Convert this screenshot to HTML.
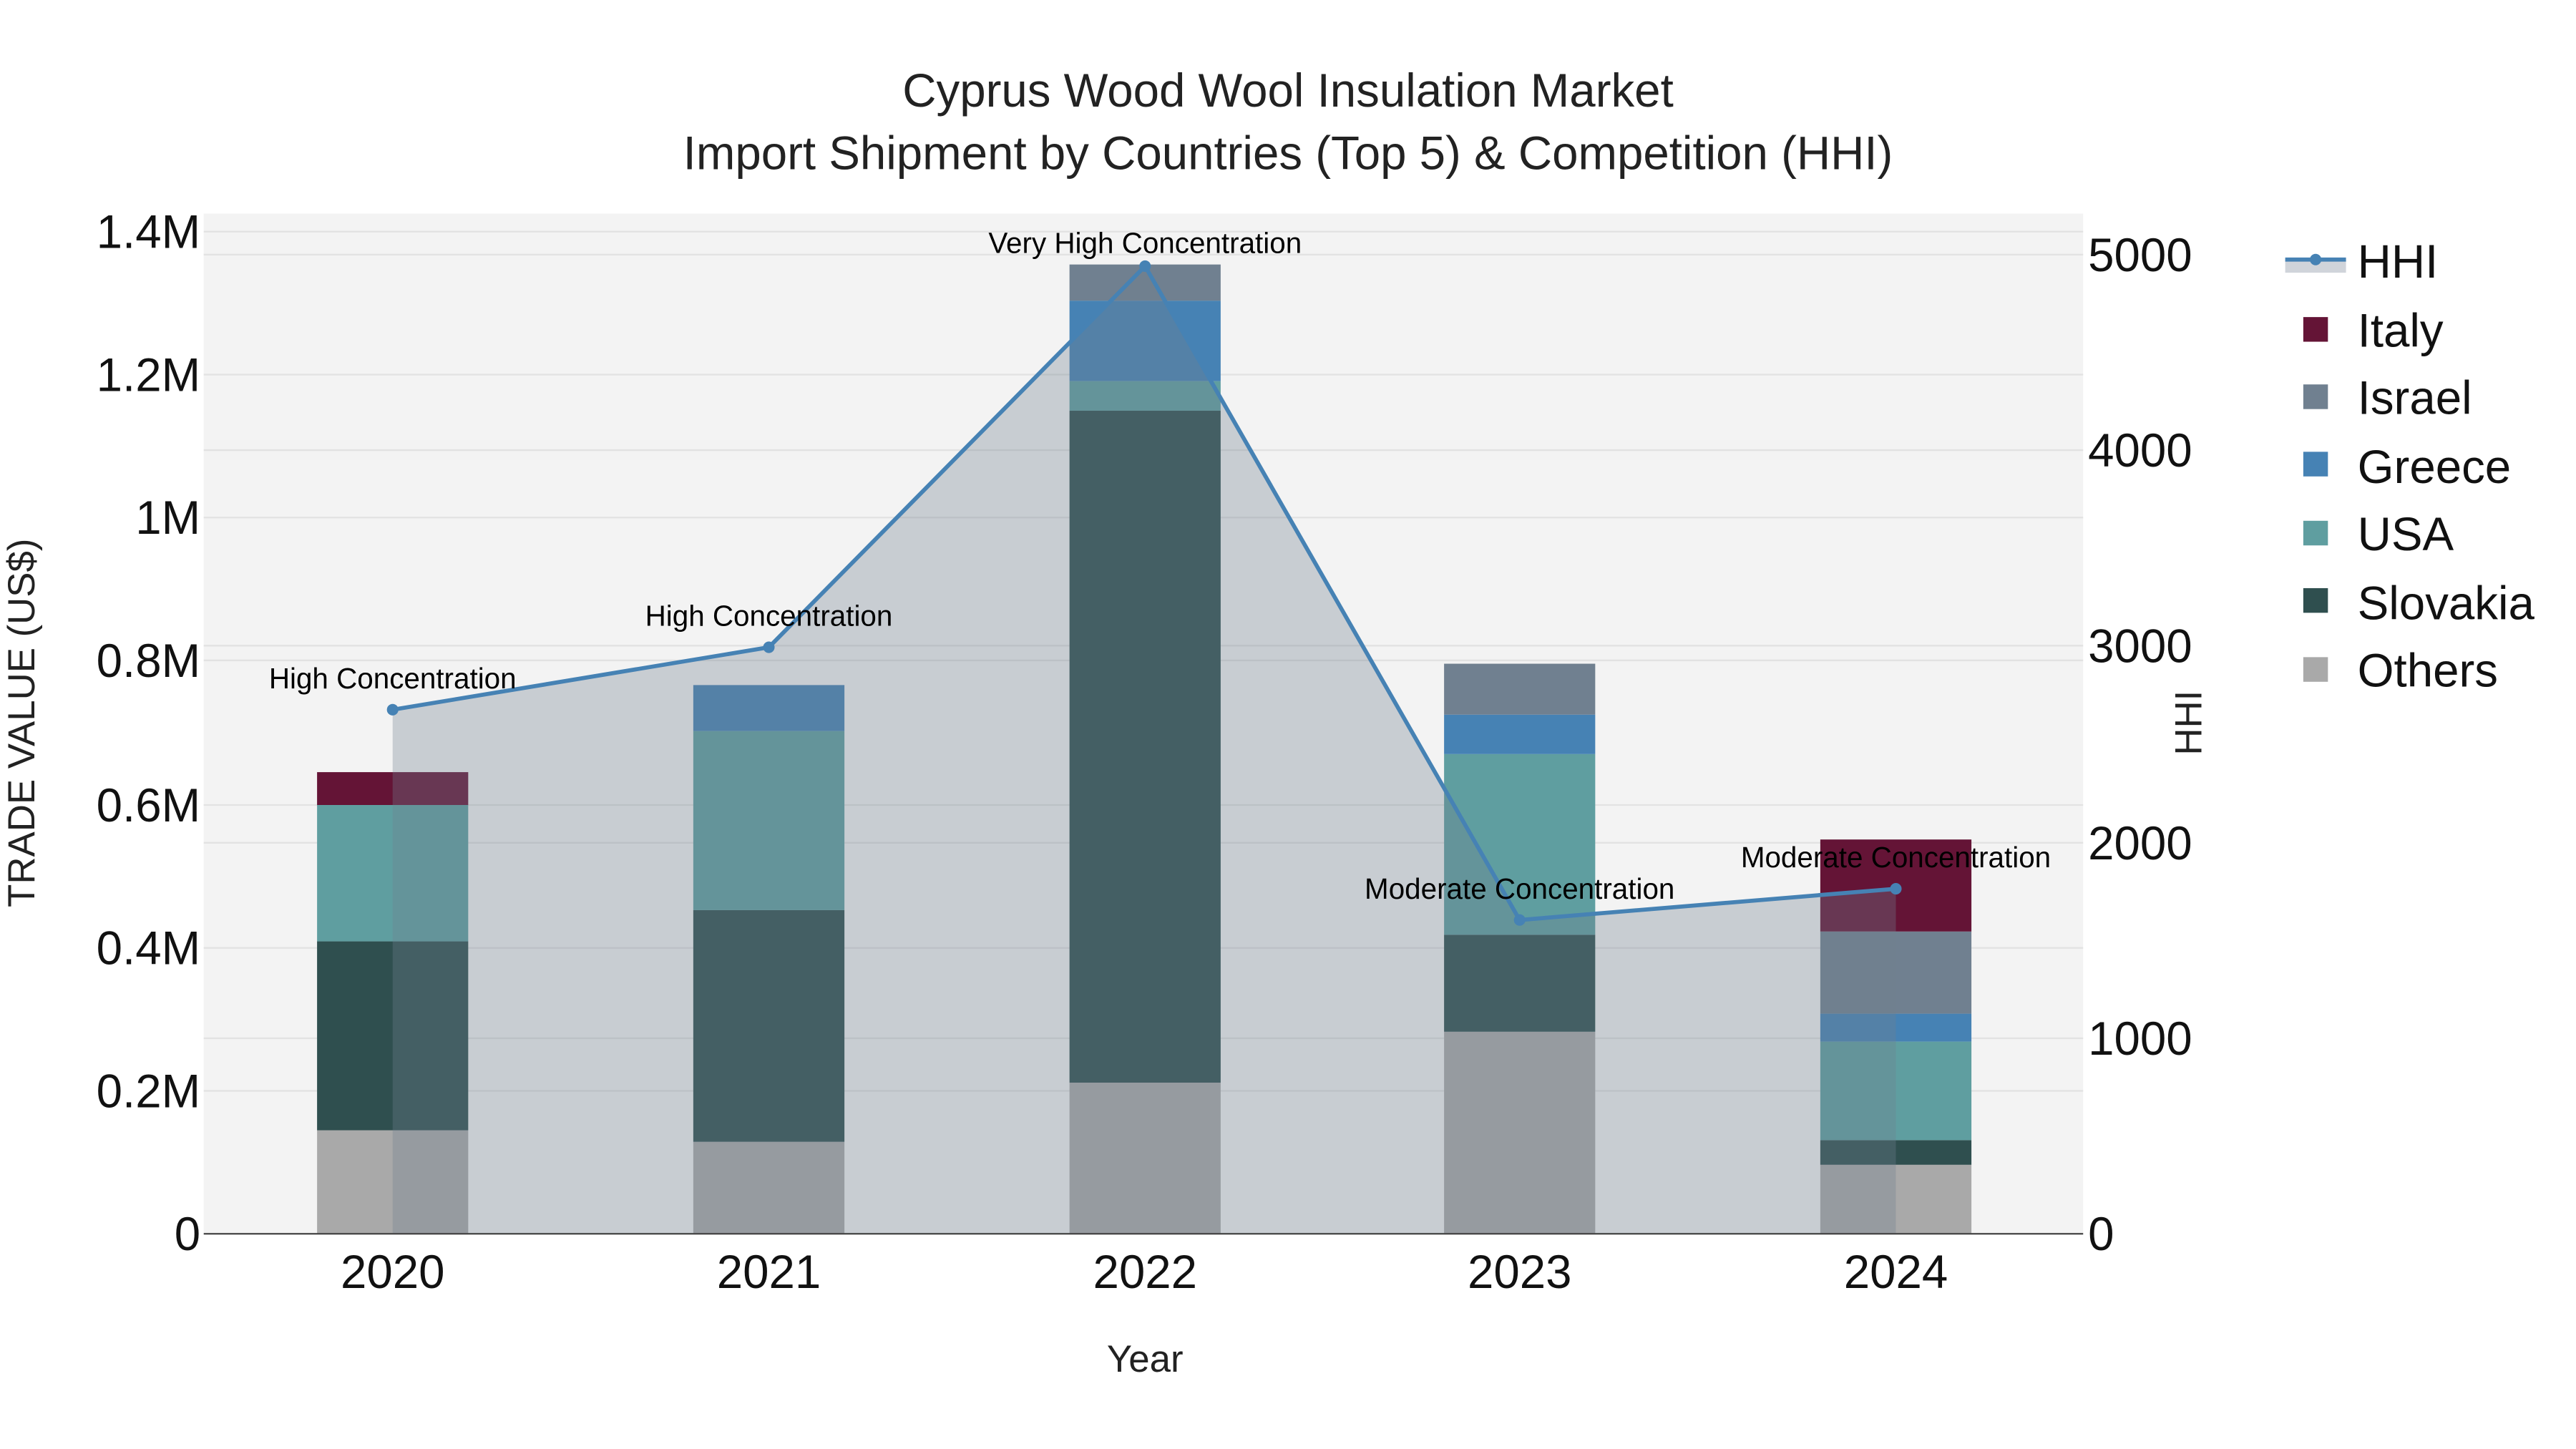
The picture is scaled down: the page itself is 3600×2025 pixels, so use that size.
<!DOCTYPE html>
<html><head><style>html,body{margin:0;padding:0;background:#fff}svg{display:block}</style></head>
<body>
<svg width="3600" height="2025" viewBox="0 0 1568 882" xmlns="http://www.w3.org/2000/svg" font-family="Liberation Sans, sans-serif">
<rect width="1568" height="882" fill="#fff"/>
<rect x="124" y="130" width="1144" height="621" fill="#f3f3f3"/>
<g stroke="#e2e2e2" stroke-width="1">
<line x1="124" x2="1268" y1="664" y2="664"/><line x1="124" x2="1268" y1="577" y2="577"/>
<line x1="124" x2="1268" y1="490" y2="490"/><line x1="124" x2="1268" y1="402" y2="402"/>
<line x1="124" x2="1268" y1="315" y2="315"/><line x1="124" x2="1268" y1="228" y2="228"/>
<line x1="124" x2="1268" y1="141" y2="141"/>
<line x1="124" x2="1268" y1="632" y2="632"/><line x1="124" x2="1268" y1="513" y2="513"/>
<line x1="124" x2="1268" y1="393" y2="393"/><line x1="124" x2="1268" y1="274" y2="274"/>
<line x1="124" x2="1268" y1="155" y2="155"/>
</g>
<g>
<rect x="193" y="688" width="92" height="63" fill="#a9a9a9"/>
<rect x="193" y="573" width="92" height="115" fill="#2f4f4f"/>
<rect x="193" y="490" width="92" height="83" fill="#5f9ea0"/>
<rect x="193" y="470" width="92" height="20" fill="#641436"/>

<rect x="422" y="695" width="92" height="56" fill="#a9a9a9"/>
<rect x="422" y="554" width="92" height="141" fill="#2f4f4f"/>
<rect x="422" y="445" width="92" height="109" fill="#5f9ea0"/>
<rect x="422" y="417" width="92" height="28" fill="#4682b4"/>

<rect x="651" y="659" width="92" height="92" fill="#a9a9a9"/>
<rect x="651" y="250" width="92" height="409" fill="#2f4f4f"/>
<rect x="651" y="232" width="92" height="18" fill="#5f9ea0"/>
<rect x="651" y="183" width="92" height="49" fill="#4682b4"/>
<rect x="651" y="161" width="92" height="22" fill="#708090"/>

<rect x="879" y="628" width="92" height="123" fill="#a9a9a9"/>
<rect x="879" y="569" width="92" height="59" fill="#2f4f4f"/>
<rect x="879" y="459" width="92" height="110" fill="#5f9ea0"/>
<rect x="879" y="435" width="92" height="24" fill="#4682b4"/>
<rect x="879" y="404" width="92" height="31" fill="#708090"/>

<rect x="1108" y="709" width="92" height="42" fill="#a9a9a9"/>
<rect x="1108" y="694" width="92" height="15" fill="#2f4f4f"/>
<rect x="1108" y="634" width="92" height="60" fill="#5f9ea0"/>
<rect x="1108" y="617" width="92" height="17" fill="#4682b4"/>
<rect x="1108" y="567" width="92" height="50" fill="#708090"/>
<rect x="1108" y="511" width="92" height="56" fill="#641436"/>
</g>
<polygon points="239,751 239,432 468,394 697,162 925,560 1154,541 1154,751" fill="rgba(112,128,144,0.33)"/>
<polyline points="239,432 468,394 697,162 925,560 1154,541" fill="none" stroke="#4682b4" stroke-width="2.5"/>
<g fill="#4682b4"><circle cx="239" cy="432" r="3.5"/><circle cx="468" cy="394" r="3.5"/><circle cx="697" cy="162" r="3.5"/><circle cx="925" cy="560" r="3.5"/><circle cx="1154" cy="541" r="3.5"/></g>
<line x1="124" x2="1268" y1="751" y2="751" stroke="#444" stroke-width="1"/>
<g font-size="17.6" fill="#000" text-anchor="middle">
<text x="239" y="419">High Concentration</text>
<text x="468" y="381">High Concentration</text>
<text x="697" y="154">Very High Concentration</text>
<text x="925" y="547">Moderate Concentration</text>
<text x="1154" y="528">Moderate Concentration</text>
</g>
<g font-size="28.5" fill="#111" text-anchor="end">
<text x="122" y="761">0</text><text x="122" y="674">0.2M</text><text x="122" y="587">0.4M</text>
<text x="122" y="500">0.6M</text><text x="122" y="412">0.8M</text><text x="122" y="325">1M</text>
<text x="122" y="238">1.2M</text><text x="122" y="151">1.4M</text>
</g>
<g font-size="28.5" fill="#111" text-anchor="start">
<text x="1271" y="761">0</text><text x="1271" y="642">1000</text><text x="1271" y="523">2000</text>
<text x="1271" y="403">3000</text><text x="1271" y="284">4000</text><text x="1271" y="165">5000</text>
</g>
<g font-size="28.5" fill="#111" text-anchor="middle">
<text x="239" y="784">2020</text><text x="468" y="784">2021</text><text x="697" y="784">2022</text>
<text x="925" y="784">2023</text><text x="1154" y="784">2024</text>
</g>
<text x="697" y="835" font-size="23" text-anchor="middle" fill="#222">Year</text>
<text transform="translate(21,440) rotate(-90)" font-size="23" text-anchor="middle" fill="#222">TRADE VALUE (US$)</text>
<text transform="translate(1340,440) rotate(-90)" font-size="23" text-anchor="middle" fill="#222">HHI</text>
<g font-size="28.5" fill="#222" text-anchor="middle">
<text x="784" y="65">Cyprus Wood Wool Insulation Market</text>
<text x="784" y="103">Import Shipment by Countries (Top 5) &amp; Competition (HHI)</text>
</g>
<rect x="1391" y="158" width="37" height="8" fill="#d0d4da"/>
<line x1="1391" x2="1428" y1="158" y2="158" stroke="#4682b4" stroke-width="2.5"/>
<circle cx="1409.5" cy="158" r="3.5" fill="#4682b4"/>
<rect x="1402" y="193" width="15" height="15" fill="#641436"/>
<rect x="1402" y="234" width="15" height="15" fill="#708090"/>
<rect x="1402" y="275" width="15" height="15" fill="#4682b4"/>
<rect x="1402" y="317" width="15" height="15" fill="#5f9ea0"/>
<rect x="1402" y="358" width="15" height="15" fill="#2f4f4f"/>
<rect x="1402" y="400" width="15" height="15" fill="#a9a9a9"/>
<g font-size="28.5" fill="#111">
<text x="1435" y="169">HHI</text><text x="1435" y="211">Italy</text><text x="1435" y="252">Israel</text>
<text x="1435" y="294">Greece</text><text x="1435" y="335">USA</text><text x="1435" y="377">Slovakia</text>
<text x="1435" y="418">Others</text>
</g>
</svg>
</body></html>
